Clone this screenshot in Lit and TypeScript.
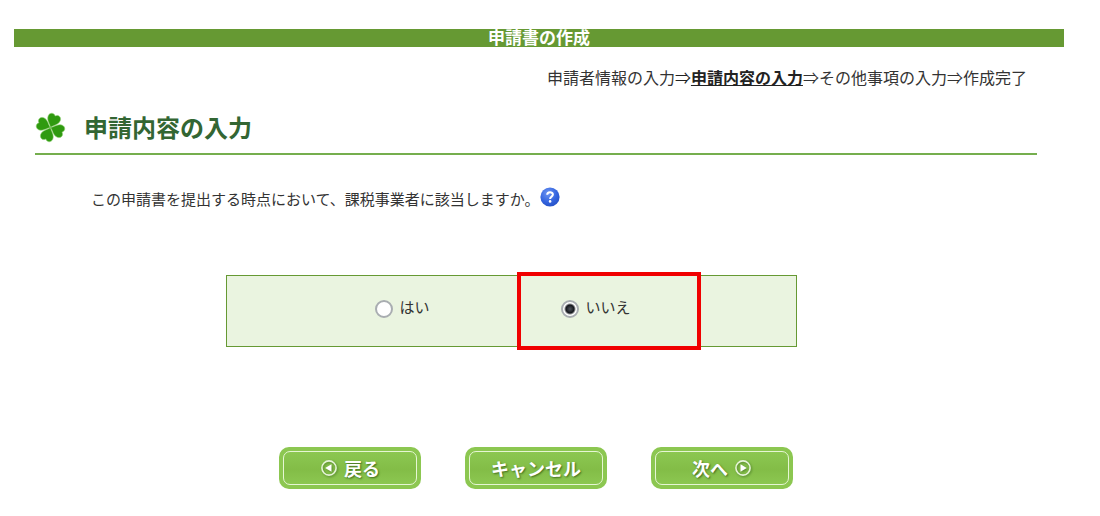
import { LitElement, html, css, svg } from "lit";
import { customElement, property, state } from "lit/decorators.js";

const STEPS = ["申請者情報の入力", "申請内容の入力", "その他事項の入力", "作成完了"];
const ANSWERS = [
  { value: "yes", label: "はい" },
  { value: "no", label: "いいえ" },
];

const LEAF = "M0 0C-1.6-3-6.4-5.2-6.3-9.8C-6.1-13.4-2.2-14.8 0-12C2.2-14.8 6.1-13.4 6.3-9.8C6.4-5.2 1.6-3 0 0Z";

@customElement("clover-button")
class CloverButton extends LitElement {
  @property() arrow = "";

  static styles = css`
    :host {
      display: block;
      width: 142px;
    }
    .button {
      display: block;
      width: 100%;
      padding: 4px;
      border: 0;
      border-radius: 10px;
      background: #8cc751;
      color: #fff;
      font: bold 18px/24px "Noto Sans CJK JP", sans-serif;
      text-shadow: 1px 1px 2px #3f6b1c;
      cursor: pointer;
    }
    .face {
      display: flex;
      align-items: center;
      justify-content: center;
      gap: 6px;
      padding: 4px 0;
      border: 1px solid #e6f6d4;
      border-radius: 7px;
      background: linear-gradient(#8cc751, #83bd47 55%, #8cc751);
    }
    .icon {
      width: 18px;
      height: 18px;
      filter: drop-shadow(1px 1px 1px #54852d);
    }
  `;

  private icon(direction: string) {
    if (this.arrow !== direction) return "";
    const d = direction === "back" ? "M10.2 4.6V11.4L4.6 8Z" : "M5.8 4.6V11.4L11.4 8Z";
    return html`<svg class="icon" viewBox="0 0 16 16" aria-hidden="true">
      <circle cx="8" cy="8" r="6.3" fill="none" stroke="#e6f4d8" stroke-width="1.4" />
      <path d=${d} fill="#fff" />
    </svg>`;
  }

  render() {
    return html`<button class="button" type="button">
      <span class="face">${this.icon("back")}<slot></slot>${this.icon("next")}</span>
    </button>`;
  }
}

@customElement("app-root")
class AppRoot extends LitElement {
  @state() answer = "no";

  static styles = css`
    :host {
      display: block;
      padding: 29px 36px 24px 14px;
      color: #333;
      font: 15px/24px "Noto Sans CJK JP", sans-serif;
    }
    .banner {
      margin: 0;
      padding-bottom: 2px;
      background: #669933;
      color: #fff;
      font-size: 17px;
      line-height: 16px;
      text-align: center;
    }
    .content {
      padding: 0 27px 0 21px;
    }
    .steps {
      display: flex;
      justify-content: flex-end;
      margin: 18px 10px 0 0;
      padding: 0;
      list-style: none;
      font-size: 16px;
    }
    .step + .step::before {
      content: "⇒";
      display: inline-block;
      font-weight: normal;
    }
    .current {
      font-weight: bold;
      color: #222;
    }
    .current .name {
      text-decoration: underline;
    }
    .heading {
      display: flex;
      align-items: center;
      gap: 18px;
      margin: 20px 0 0;
      padding-bottom: 8px;
      border-bottom: 2px solid #75ae4e;
      color: #336633;
      font-size: 24px;
      line-height: 36px;
    }
    .clover {
      width: 31px;
      height: 31px;
    }
    .question {
      display: flex;
      align-items: center;
      margin: 32px 0 0 56px;
    }
    .help {
      width: 20px;
      height: 20px;
      padding: 0;
      margin-bottom: 4px;
      border: 0;
      background: none;
      cursor: pointer;
    }
    .help svg {
      display: block;
    }
    .answers {
      display: grid;
      grid-template-columns: 186px 186px;
      justify-content: center;
      width: 57%;
      box-sizing: border-box;
      margin: 64px 0 0 191px;
      padding: 0 10px 0 20px;
      border: 1px solid #669933;
      background: #eaf4e0;
    }
    .answer {
      position: relative;
      display: flex;
      align-items: center;
      gap: 7px;
      padding: 19px 0 27px 44px;
    }
    .marked::after {
      content: "";
      position: absolute;
      inset: -4px 2px -4px 0;
      border: 4px solid #f00000;
      pointer-events: none;
    }
    .radio {
      appearance: none;
      width: 18px;
      height: 18px;
      margin: 4px 0 0;
      border: 2px solid #a9adb1;
      border-radius: 50%;
      background: #fff;
    }
    .radio:checked {
      background: radial-gradient(circle at 50% 50%, #50545c 0, #14161c 4px, #fff 6px);
    }
    .actions {
      display: flex;
      justify-content: center;
      gap: 44px;
      margin-top: 100px;
    }
  `;

  render() {
    return html`
      <h1 class="banner">申請書の作成</h1>
      <main class="content">
        <ol class="steps">
          ${STEPS.map(
            (name, i) => html`<li class="step ${i === 1 ? "current" : ""}"><span class="name">${name}</span></li>`
          )}
        </ol>
        <h2 class="heading">
          <svg class="clover" viewBox="-15 -15 30 30" aria-hidden="true">
            ${[22, 112, 202, 292].map(
              (turn) => svg`<path d=${LEAF} transform="rotate(${turn})" fill="#2f9a10" stroke="#8fcf74" stroke-width=".5" />`
            )}
          </svg>
          申請内容の入力
        </h2>
        <div class="question">
          <span id="question">この申請書を提出する時点において、課税事業者に該当しますか。</span>
          <button class="help" type="button" aria-label="ヘルプ">
            <svg width="20" height="20" viewBox="0 0 20 20" aria-hidden="true">
              <defs>
                <radialGradient id="ball" cx=".4" cy=".3" r=".75">
                  <stop offset="0" stop-color="#6d95f2" />
                  <stop offset=".6" stop-color="#3565df" />
                  <stop offset="1" stop-color="#2450c4" />
                </radialGradient>
              </defs>
              <circle cx="10" cy="10" r="9.6" fill="url(#ball)" />
              <path d="M7.2 7.8C7.2 4.4 12.9 4.5 12.9 7.6C12.9 9.7 10.1 9.6 10.1 12" fill="none" stroke="#fff" stroke-width="2" />
              <circle cx="10.1" cy="14.4" r="1.3" fill="#fff" />
            </svg>
          </button>
        </div>
        <div class="answers" role="radiogroup" aria-labelledby="question">
          ${ANSWERS.map(
            ({ value, label }) => html`<label class="answer ${value === "no" ? "marked" : ""}">
              <input
                class="radio"
                type="radio"
                name="taxable"
                value=${value}
                .checked=${this.answer === value}
                @change=${() => (this.answer = value)}
              />
              <span>${label}</span>
            </label>`
          )}
        </div>
        <div class="actions">
          <clover-button arrow="back">戻る</clover-button>
          <clover-button>キャンセル</clover-button>
          <clover-button arrow="next">次へ</clover-button>
        </div>
      </main>
    `;
  }
}
